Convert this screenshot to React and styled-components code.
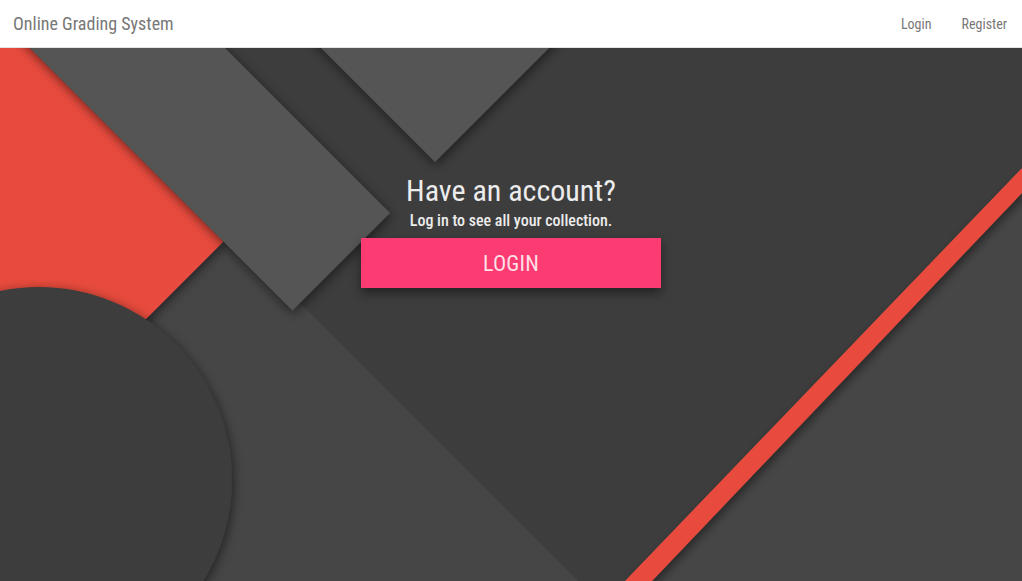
import React from "react";
import styled, { createGlobalStyle } from "styled-components";

const GlobalStyle = createGlobalStyle`
  html, body {
    margin: 0;
    padding: 0;
    height: 100%;
  }
  body {
    font-family: "Roboto Condensed", Roboto, "Liberation Sans", sans-serif;
    font-stretch: 87.5%;
    background: #464646;
  }
  #root {
    height: 100%;
  }
`;

const Page = styled.div`
  display: flex;
  flex-direction: column;
  height: 100vh;
  overflow: hidden;
`;

const NavBar = styled.nav`
  display: flex;
  align-items: center;
  justify-content: space-between;
  height: 47px;
  padding: 0 15px 0 13px;
  background: #fff;
  border-bottom: 1px solid #e3e3e3;
  flex-shrink: 0;
`;

const Brand = styled.a`
  color: #777;
  font-size: 18px;
  text-decoration: none;
`;

const NavLinks = styled.ul`
  display: flex;
  list-style: none;
  margin: 0 -15px 0 0;
  padding: 0;
`;

const NavLink = styled.a`
  display: block;
  padding: 0 15px;
  color: #777;
  font-size: 14px;
  text-decoration: none;
`;

const Hero = styled.main`
  position: relative;
  flex: 1;
  overflow: hidden;
`;

const Backdrop = styled.svg`
  position: absolute;
  inset: 0;
  width: 100%;
  height: 100%;
  display: block;
`;

const Content = styled.div`
  position: relative;
  display: flex;
  flex-direction: column;
  align-items: center;
  padding-top: 126px;
  color: #ececec;
`;

const Title = styled.h2`
  margin: 0;
  font-size: 30px;
  font-weight: 400;
  line-height: 33px;
`;

const Subtitle = styled.p`
  margin: 4px 0 0;
  font-size: 16px;
  font-weight: 500;
  line-height: 20px;
`;

const LoginButton = styled.button`
  margin-top: 7px;
  width: 300px;
  height: 50px;
  border: none;
  background: #fb3b72;
  color: rgba(255, 255, 255, 0.85);
  font-family: inherit;
  font-stretch: inherit;
  font-size: 22px;
  letter-spacing: 0.2px;
  box-shadow: 0 5px 10px rgba(0, 0, 0, 0.45);
  cursor: pointer;
`;

function Wallpaper() {
  return (
    <Backdrop viewBox="0 48 1022 533" preserveAspectRatio="xMidYMid slice">
      <defs>
        <filter id="shade" x="-30%" y="-30%" width="160%" height="160%">
          <feDropShadow dx="1" dy="3" stdDeviation="6" floodColor="#000" floodOpacity="0.55" />
        </filter>
        <filter id="shadeSoft" x="-30%" y="-30%" width="160%" height="160%">
          <feDropShadow dx="2" dy="4" stdDeviation="5" floodColor="#000" floodOpacity="0.45" />
        </filter>
      </defs>
      <rect x="0" y="0" width="1022" height="600" fill="#464646" />
      <polygon points="150,0 1022,0 1022,168 625,581 578,581 300,303" fill="#3d3d3d" />
      <polygon points="1022,168 1022,193 652,581 625,581" fill="#e84c3d" filter="url(#shadeSoft)" />
      <polygon points="-60,0 -18,0 223.5,241.5 -60,525" fill="#e84c3d" filter="url(#shade)" />
      <polygon points="273,0 597,0 435,162" fill="#555" filter="url(#shade)" />
      <polygon points="-18,0 177,0 390,213 292.5,310.5" fill="#555" filter="url(#shade)" />
      <circle cx="39" cy="480" r="193" fill="#3c3c3c" filter="url(#shade)" />
    </Backdrop>
  );
}

export default function App() {
  return (
    <Page>
      <GlobalStyle />
      <NavBar>
        <Brand href="#">Online Grading System</Brand>
        <NavLinks>
          <li>
            <NavLink href="#">Login</NavLink>
          </li>
          <li>
            <NavLink href="#">Register</NavLink>
          </li>
        </NavLinks>
      </NavBar>
      <Hero>
        <Wallpaper />
        <Content>
          <Title>Have an account?</Title>
          <Subtitle>Log in to see all your collection.</Subtitle>
          <LoginButton>LOGIN</LoginButton>
        </Content>
      </Hero>
    </Page>
  );
}
